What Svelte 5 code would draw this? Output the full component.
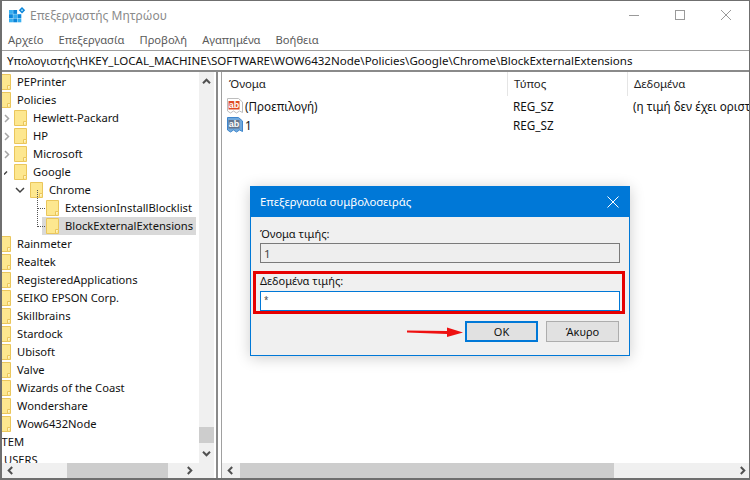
<script>
  const rows = [
    { t: 'PEPrinter', d: 0 },
    { t: 'Policies', d: 0 },
    { t: 'Hewlett-Packard', d: 1, e: 'closed' },
    { t: 'HP', d: 1, e: 'closed' },
    { t: 'Microsoft', d: 1, e: 'closed' },
    { t: 'Google', d: 1, e: 'tick' },
    { t: 'Chrome', d: 2, e: 'open' },
    { t: 'ExtensionInstallBlocklist', d: 3, c: 1 },
    { t: 'BlockExternalExtensions', d: 3, c: 1, s: 1 },
    { t: 'Rainmeter', d: 0 },
    { t: 'Realtek', d: 0 },
    { t: 'RegisteredApplications', d: 0 },
    { t: 'SEIKO EPSON Corp.', d: 0 },
    { t: 'Skillbrains', d: 0 },
    { t: 'Stardock', d: 0 },
    { t: 'Ubisoft', d: 0 },
    { t: 'Valve', d: 0 },
    { t: 'Wizards of the Coast', d: 0 },
    { t: 'Wondershare', d: 0 },
    { t: 'Wow6432Node', d: 0 }
  ];
  const menus = ['Αρχείο', 'Επεξεργασία', 'Προβολή', 'Αγαπημένα', 'Βοήθεια'];
  const tiles = [];
  for (let y = 0; y < 3; y++) for (let x = 0; x < 3; x++) if (!(y === 0 && x === 2)) tiles.push([x * 4.2, 3 + y * 4.2, (x + y) % 2 ? '#0b86da' : '#36aef0']);
</script>

{#snippet chevron(dir)}
  <svg class="chev" width="9" height="9" viewBox="0 0 9 9">
    {#if dir === 'up'}<path d="M1 6.200 4.500 2.700 8 6.200" />
    {:else if dir === 'down'}<path d="M1 2.800 4.500 6.300 8 2.800" />
    {:else if dir === 'left'}<path d="M6.200 1 2.700 4.500 6.200 8" />
    {:else}<path d="M2.800 1 6.300 4.500 2.800 8" />{/if}
  </svg>
{/snippet}

{#snippet abIcon(blue)}
  <svg class="ab" width="16" height="17" viewBox="0 0 16 17">
    {#if blue}
      <path d="M.5 1.500h11l4 3.500v10.500l-3-1.500-3 2-3-2-3 2-3-2z" fill="#6fa8dc" stroke="#3f86cc" />
      <rect x="1.500" y="4" width="11" height="8.500" fill="#66758c" />
    {:else}
      <path d="M.5 1.500h11l4 3.500v10.500l-3-1.500-3 2-3-2-3 2-3-2z" fill="#fff" stroke="#bdbdbd" />
      <rect x="1.500" y="4" width="11" height="8.500" fill="#df4a26" />
    {/if}
    <text x="1.700" y="11.300" fill="#fff" class="abtext">ab</text>
  </svg>
{/snippet}

<div class="window">
  <header class="titlebar">
    <svg class="appicon" width="17" height="16" viewBox="0 0 17 16">
      {#each tiles as [x, y, fill]}<rect {x} {y} width="3.900" height="3.900" {fill} />{/each}
      <path d="M13 0l3.200 3.200L13 6.400 9.800 3.200z" fill="#0b86da" />
      <path d="M13 2l1.200 1.200L13 4.400l-1.200-1.200z" fill="#a8dcf8" />
    </svg>
    <span class="apptitle">Επεξεργαστής Μητρώου</span>
    <div class="winctl">
      <svg width="12" height="12" viewBox="0 0 12 12"><path d="M1 6.500h10" /></svg>
      <svg width="12" height="12" viewBox="0 0 12 12"><rect x="1.500" y="1.500" width="9" height="9" /></svg>
      <svg width="12" height="12" viewBox="0 0 12 12"><path d="M1 1l10 10M11 1 1 11" /></svg>
    </div>
  </header>

  <nav class="menubar">
    {#each menus as m}<span>{m}</span>{/each}
  </nav>

  <div class="address">Υπολογιστής\HKEY_LOCAL_MACHINE\SOFTWARE\WOW6432Node\Policies\Google\Chrome\BlockExternalExtensions</div>

  <main class="panes">
    <section class="tree">
      <div class="treebody">
        <div class="treelist">
          {#each rows as r}
            <div class="row d{r.d}">
              {#if r.c}<i class="dots"></i>{/if}
              {#if r.e === 'closed'}
                <svg class="exp" width="6" height="9" viewBox="0 0 6 9"><path d="M1 1l3.500 3.500L1 8" fill="none" stroke="#a6a6a6" stroke-width="1.500" /></svg>
              {:else if r.e === 'tick'}
                <svg class="exp" width="6" height="9" viewBox="0 0 6 9"><path d="M0 6.500 3 3.500" fill="none" stroke="#404040" stroke-width="1.500" /></svg>
              {:else if r.e === 'open'}
                <svg class="exp" width="10" height="7" viewBox="0 0 10 7"><path d="M1 1l4 4 4-4" fill="none" stroke="#404040" stroke-width="1.500" /></svg>
              {/if}
              <div class="item" class:sel={r.s}>
                <svg class="folder" width="13" height="16" viewBox="0 0 13 16">
                  <path d="M.5.500h12v15H.5z" fill="#fde78f" stroke="#eac65c" />
                  <path d="M9.500 15.500v-4h3" fill="#fff3c4" stroke="#eac65c" />
                </svg>
                <span>{r.t}</span>
              </div>
            </div>
          {/each}
          <div class="root sys">SYSTEM</div>
          <div class="root usr">USERS</div>
        </div>
        <div class="vscroll">
          {@render chevron('up')}
          <div class="vtrack"><div class="vthumb"></div></div>
          {@render chevron('down')}
        </div>
      </div>
      <div class="hscroll hl">
        {@render chevron('left')}
        <div class="htrack tl"><div class="hthumb"></div></div>
        {@render chevron('right')}
      </div>
    </section>

    <section class="list">
      <div class="listbody">
        <div class="cols">
          <span class="c1">Όνομα</span>
          <span class="c2">Τύπος</span>
          <span class="c3">Δεδομένα</span>
        </div>
        <div class="lrow">
          <span class="c1">{@render abIcon(false)}(Προεπιλογή)</span>
          <span class="c2">REG_SZ</span>
          <span class="c3">(η τιμή δεν έχει οριστεί)</span>
        </div>
        <div class="lrow">
          <span class="c1">{@render abIcon(true)}1</span>
          <span class="c2">REG_SZ</span>
        </div>
      </div>
      <div class="hscroll hr">
        {@render chevron('left')}
        <div class="htrack tr"><div class="hthumb"></div></div>
        {@render chevron('right')}
      </div>
    </section>
  </main>

  <div class="dialog">
    <div class="dtitle">
      <span>Επεξεργασία συμβολοσειράς</span>
      <svg width="12" height="12" viewBox="0 0 12 12"><path d="M.5.500l11 11M11.500.500l-11 11" /></svg>
    </div>
    <div class="dbody">
      <div class="field plain">
        <label for="vname">Όνομα τιμής:</label>
        <input id="vname" class="ro" value="1" readonly />
      </div>
      <div class="field marked">
        <label for="vdata">Δεδομένα τιμής:</label>
        <input id="vdata" class="ed" value="*" readonly />
      </div>
      <div class="buttons">
        <svg class="arrow" width="56" height="12" viewBox="0 0 56 12">
          <path d="M0 4.500 40 5 40 1.500 56 6.500 40 11 40 8 0 6.500z" fill="#ee1111" />
        </svg>
        <button class="ok">ΟΚ</button>
        <button class="cancel">Άκυρο</button>
      </div>
    </div>
  </div>
</div>

<style>
  :global(body) { margin: 0; overflow: hidden; background: #fff; }
  .window {
    position: relative;
    width: 750px;
    height: 480px;
    box-sizing: border-box;
    border: solid #6f6f6f;
    border-width: 1px 1px 2px 2px;
    display: flex;
    flex-direction: column;
    overflow: hidden;
    font: 11.2px/18px "Noto Sans", "Liberation Sans", sans-serif;
    color: #111;
    background: #fff;
  }
  .titlebar {
    height: 29px;
    display: flex;
    align-items: center;
    padding-left: 7px;
    flex: none;
  }
  .appicon { margin-right: 4px; margin-top: -1px; }
  .apptitle { color: #8a8a8a; font-size: 12px; }
  .winctl { margin-left: auto; display: flex; gap: 34px; padding-right: 17px; margin-top: -2px; }
  .winctl svg { fill: none; stroke: #9a9a9a; }
  .menubar {
    height: 20px;
    flex: none;
    display: flex;
    gap: 15px;
    padding-left: 6px;
    align-items: center;
    color: #5a5a5a;
    font-size: 11.2px;
  }
  .address {
    height: 19px;
    flex: none;
    border-top: 1px solid #a0a0a0;
    border-bottom: 2px solid #8a8a8a;
    padding-left: 5px;
    font-size: 11.55px;
    line-height: 19px;
    white-space: nowrap;
    color: #111;
  }
  .panes { flex: 1; display: flex; min-height: 0; }
  .tree {
    width: 216px;
    flex: none;
    box-sizing: border-box;
    border-right: 2px solid #8a8a8a;
    display: flex;
    flex-direction: column;
    min-height: 0;
  }
  .treebody { flex: 1; display: flex; min-height: 0; }
  .treelist { flex: 1; overflow: hidden; min-width: 0; padding-top: 1px; }
  .row { position: relative; height: 18px; display: flex; align-items: center; white-space: nowrap; }
  .d0 { padding-left: 0; }
  .d1 { padding-left: 12px; }
  .d2 { padding-left: 28px; }
  .d3 { padding-left: 40px; }
  .item { display: flex; align-items: center; height: 18px; box-sizing: border-box; }
  .d0 .item { margin-left: -4px; }
  .d3 .item { padding-left: 4px; }
  .item span { margin-left: 6px; }
  .sel { background: #d9d9d9; width: 154px; }
  .folder { flex: none; }
  .exp { position: absolute; top: 5px; }
  .d1 .exp { left: 2px; }
  .d2 .exp { left: 13px; top: 6px; }
  .dots {
    position: absolute;
    left: 35px;
    top: -9px;
    width: 7px;
    height: 18px;
    border-left: 1px dotted #555;
    border-bottom: 1px dotted #555;
  }
  .root { height: 18px; white-space: nowrap; }
  .sys { margin-left: -19px; }
  .usr { margin-left: 2px; }
  .vscroll {
    width: 15px;
    flex: none;
    margin-right: 2px;
    background: #f0f0f0;
    display: flex;
    flex-direction: column;
    align-items: center;
  }
  .vscroll .chev:first-child { margin-top: 5px; }
  .vscroll .chev:last-child { margin-bottom: 5px; }
  .vtrack { flex: 1; align-self: stretch; padding-top: 339px; margin: 2px 0; }
  .vthumb { height: 16px; background: #cdcdcd; }
  .hscroll {
    height: 15px;
    flex: none;
    background: #f0f0f0;
    display: flex;
    align-items: center;
    padding: 0 4px;
  }
  .hl { margin-right: 2px; padding-right: 20px; }
  .hr { padding-right: 2px; }
  .htrack { flex: 1; align-self: stretch; }
  .hthumb { height: 100%; background: #cdcdcd; }
  .tl { padding-left: 52px; padding-right: 17px; }
  .tr { padding-left: 5px; padding-right: 124px; }
  .chev { fill: none; stroke: #505050; stroke-width: 2; flex: none; }
  .list {
    flex: 1;
    margin-left: 3px;
    border-left: 1px solid #a0a0a0;
    display: flex;
    flex-direction: column;
    min-width: 0;
    font-size: 11.7px;
  }
  .listbody { flex: 1; overflow: hidden; }
  .cols { display: flex; height: 24px; align-items: center; color: #222; font-size: 11.4px; }
  .cols span { align-self: stretch; line-height: 24px; box-sizing: border-box; }
  .cols .c2, .cols .c3 { border-left: 1px solid #e5e5e5; }
  .c1 { width: 285px; padding-left: 7px; box-sizing: border-box; flex: none; display: flex; align-items: center; }
  .c2 { width: 120px; padding-left: 6px; box-sizing: border-box; flex: none; }
  .c3 { padding-left: 6px; white-space: nowrap; flex: none; }
  .lrow { display: flex; height: 19px; align-items: center; white-space: nowrap; }
  .lrow .c1 { padding-left: 5px; }
  .ab { margin-right: 2px; flex: none; }
  .abtext { font: bold 9px "Liberation Sans", sans-serif; }
  .dialog {
    position: absolute;
    left: 248px;
    top: 185px;
    width: 380px;
    height: 170px;
    box-sizing: border-box;
    border: 1px solid #0078d7;
    background: #f0f0f0;
    box-shadow: 0 2px 14px rgba(0, 0, 0, 0.2);
    display: flex;
    flex-direction: column;
    font-size: 11px;
  }
  .dtitle {
    height: 30px;
    flex: none;
    background: #0078d7;
    color: #fff;
    font-size: 11.3px;
    display: flex;
    align-items: center;
    justify-content: space-between;
    padding: 0 10px 0 9px;
  }
  .dtitle svg { fill: none; stroke: #fff; }
  .dbody { flex: 1; display: flex; flex-direction: column; padding: 8px 9px 0 2px; }
  .field { display: flex; flex-direction: column; }
  .field label { line-height: 18px; }
  .plain { padding: 0 0 0 7px; }
  .marked {
    border: 3px solid #e60000;
    margin-top: 8px;
    margin-right: -5px;
    padding: 0 4px;
    height: 43px;
    box-sizing: border-box;
  }
  .marked label { line-height: 14px; margin-bottom: 3px; }
  input {
    height: 20px;
    box-sizing: border-box;
    width: 360px;
    font: 11.5px "Noto Sans", "Liberation Sans", sans-serif;
    padding: 0 3px;
    margin: 0;
    outline: none;
    color: #444;
    border-radius: 0;
  }
  .ro { border: 1px solid #7a7a7a; background: #eeeeee; }
  .ed { border: 1px solid #0078d7; background: #fff; font-size: 8px; line-height: 12px; padding-bottom: 4px; }
  .buttons { display: flex; align-items: center; margin-top: 7px; justify-content: flex-end; padding-right: 1px; }
  .arrow { margin-right: 2px; }
  button {
    font: 11px "Noto Sans", "Liberation Sans", sans-serif;
    width: 73px;
    height: 21px;
    padding: 0;
    box-sizing: border-box;
    background: #e1e1e1;
    color: #111;
    border-radius: 0;
  }
  .ok { border: 2px solid #0078d7; margin-right: 8px; }
  .cancel { border: 1px solid #adadad; }
</style>
